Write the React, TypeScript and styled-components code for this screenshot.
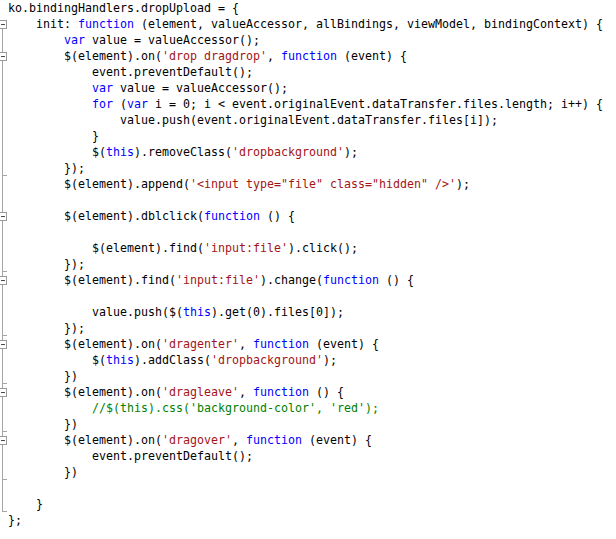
import React from "react";
import styled, { createGlobalStyle, css } from "styled-components";

const GlobalStyle = createGlobalStyle`
  html, body { margin: 0; padding: 0; background: #ffffff; }
`;

type Kind = "p" | "k" | "s" | "c";
type Mark = "none" | "first" | "open" | "mid" | "end";
type Tok = [Kind, string];

const Editor = styled.div`
  display: flex;
  flex-direction: column;
  width: 616px;
  height: 539px;
  background: #ffffff;
  font-family: "DejaVu Sans Mono", "Liberation Mono", monospace;
  font-size: 11.63px;
  color: #000000;
  overflow: hidden;
`;

const Row = styled.div`
  display: flex;
  height: 16px;
  line-height: 16px;
`;

const Gutter = styled.div<{ $mark: Mark }>`
  position: relative;
  flex: none;
  width: 8px;
  height: 16px;

  &::before {
    content: "";
    position: absolute;
    left: 2px;
    width: 1px;
    background: #a6a6a6;
    display: ${(p) => (p.$mark === "none" ? "none" : "block")};
    top: ${(p) => (p.$mark === "first" ? "12px" : "0")};
    bottom: 0;
  }

  &::after {
    content: "";
    position: absolute;
    display: none;
    ${(p) =>
      (p.$mark === "first" || p.$mark === "open") &&
      css`
        display: block;
        left: -2px;
        top: 4px;
        width: 7px;
        height: 7px;
        border: 1px solid #9a9a9a;
        background: linear-gradient(#4a4a4a, #4a4a4a) no-repeat 2px 3px / 4px 1px,
          #ffffff;
      `}
    ${(p) =>
      p.$mark === "end" &&
      css`
        display: block;
        left: 2px;
        top: 15px;
        width: 5px;
        height: 1px;
        background: #a6a6a6;
      `}
  }
`;

const Code = styled.span`
  white-space: pre;
`;

const colors: Record<Kind, string> = {
  p: "#000000",
  k: "#0000ff",
  s: "#a31515",
  c: "#008000",
};

const Token = styled.span<{ $kind: Kind }>`
  color: ${(p) => colors[p.$kind]};
`;

const lines: { mark: Mark; toks: Tok[] }[] = [
  { mark: "none", toks: [["p", "ko.bindingHandlers.dropUpload = {"]] },
  {
    mark: "first",
    toks: [
      ["p", "    init: "],
      ["k", "function"],
      ["p", " (element, valueAccessor, allBindings, viewModel, bindingContext) {"],
    ],
  },
  { mark: "mid", toks: [["p", "        "], ["k", "var"], ["p", " value = valueAccessor();"]] },
  {
    mark: "open",
    toks: [
      ["p", "        $(element).on("],
      ["s", "'drop dragdrop'"],
      ["p", ", "],
      ["k", "function"],
      ["p", " (event) {"],
    ],
  },
  { mark: "mid", toks: [["p", "            event.preventDefault();"]] },
  { mark: "mid", toks: [["p", "            "], ["k", "var"], ["p", " value = valueAccessor();"]] },
  {
    mark: "mid",
    toks: [
      ["p", "            "],
      ["k", "for"],
      ["p", " ("],
      ["k", "var"],
      ["p", " i = 0; i < event.originalEvent.dataTransfer.files.length; i++) {"],
    ],
  },
  { mark: "mid", toks: [["p", "                value.push(event.originalEvent.dataTransfer.files[i]);"]] },
  { mark: "mid", toks: [["p", "            }"]] },
  {
    mark: "mid",
    toks: [
      ["p", "            $("],
      ["k", "this"],
      ["p", ").removeClass("],
      ["s", "'dropbackground'"],
      ["p", ");"],
    ],
  },
  { mark: "end", toks: [["p", "        });"]] },
  {
    mark: "mid",
    toks: [
      ["p", "        $(element).append("],
      ["s", "'<input type=\"file\" class=\"hidden\" />'"],
      ["p", ");"],
    ],
  },
  { mark: "mid", toks: [["p", ""]] },
  {
    mark: "open",
    toks: [["p", "        $(element).dblclick("], ["k", "function"], ["p", " () {"]],
  },
  { mark: "mid", toks: [["p", ""]] },
  {
    mark: "mid",
    toks: [["p", "            $(element).find("], ["s", "'input:file'"], ["p", ").click();"]],
  },
  { mark: "end", toks: [["p", "        });"]] },
  {
    mark: "open",
    toks: [
      ["p", "        $(element).find("],
      ["s", "'input:file'"],
      ["p", ").change("],
      ["k", "function"],
      ["p", " () {"],
    ],
  },
  { mark: "mid", toks: [["p", ""]] },
  {
    mark: "mid",
    toks: [["p", "            value.push($("], ["k", "this"], ["p", ").get(0).files[0]);"]],
  },
  { mark: "end", toks: [["p", "        });"]] },
  {
    mark: "open",
    toks: [
      ["p", "        $(element).on("],
      ["s", "'dragenter'"],
      ["p", ", "],
      ["k", "function"],
      ["p", " (event) {"],
    ],
  },
  {
    mark: "mid",
    toks: [
      ["p", "            $("],
      ["k", "this"],
      ["p", ").addClass("],
      ["s", "'dropbackground'"],
      ["p", ");"],
    ],
  },
  { mark: "end", toks: [["p", "        })"]] },
  {
    mark: "open",
    toks: [
      ["p", "        $(element).on("],
      ["s", "'dragleave'"],
      ["p", ", "],
      ["k", "function"],
      ["p", " () {"],
    ],
  },
  { mark: "mid", toks: [["p", "            "], ["c", "//$(this).css('background-color', 'red');"]] },
  { mark: "end", toks: [["p", "        })"]] },
  {
    mark: "open",
    toks: [
      ["p", "        $(element).on("],
      ["s", "'dragover'"],
      ["p", ", "],
      ["k", "function"],
      ["p", " (event) {"],
    ],
  },
  { mark: "mid", toks: [["p", "            event.preventDefault();"]] },
  { mark: "end", toks: [["p", "        })"]] },
  { mark: "mid", toks: [["p", ""]] },
  { mark: "end", toks: [["p", "    }"]] },
  { mark: "none", toks: [["p", "};"]] },
];

export default function App() {
  return (
    <>
      <GlobalStyle />
      <Editor>
        {lines.map((line, i) => (
          <Row key={i}>
            <Gutter $mark={line.mark} />
            <Code>
              {line.toks.map(([kind, text], j) => (
                <Token key={j} $kind={kind}>
                  {text}
                </Token>
              ))}
            </Code>
          </Row>
        ))}
      </Editor>
    </>
  );
}
